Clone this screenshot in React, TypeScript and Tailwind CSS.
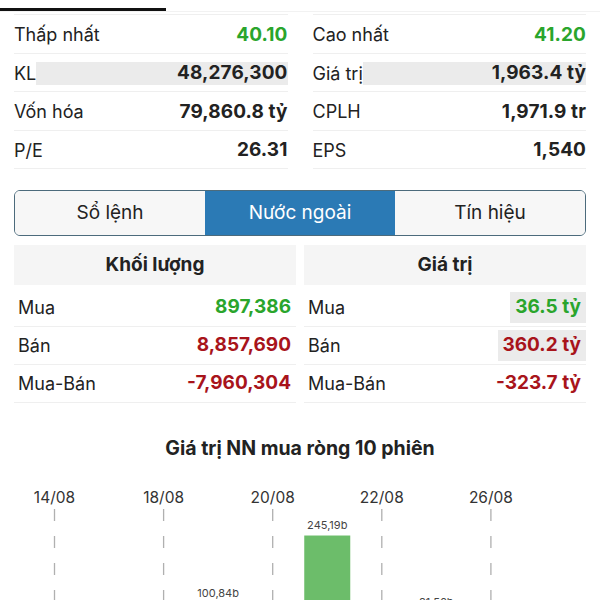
import React from 'react';

const font = { fontFamily: 'Inter, "Noto Sans", sans-serif' };

type Stat = { label: string; value: string; color?: string; flash?: boolean };

const leftStats: Stat[] = [
  { label: 'Thấp nhất', value: '40.10', color: 'text-[#2aa52c]' },
  { label: 'KL', value: '48,276,300', flash: true },
  { label: 'Vốn hóa', value: '79,860.8 tỷ' },
  { label: 'P/E', value: '26.31' },
];

const rightStats: Stat[] = [
  { label: 'Cao nhất', value: '41.20', color: 'text-[#2aa52c]' },
  { label: 'Giá trị', value: '1,963.4 tỷ', flash: true },
  { label: 'CPLH', value: '1,971.9 tr' },
  { label: 'EPS', value: '1,540' },
];

const StatColumn = ({ rows }: { rows: Stat[] }) => (
  <div className="flex flex-col border-b border-[#efefef]">
    {rows.map((r) => (
      <div key={r.label} className="h-[38.5px] border-t border-[#efefef] flex items-center pt-[2px]">
        <span className="text-[18px] text-[#222] whitespace-nowrap">{r.label}</span>
        <div
          className={
            'flex-1 h-[23px] flex items-center justify-end ' + (r.flash ? 'bg-[#ebebeb]' : '')
          }
        >
          <span className={'text-[19px] font-bold tracking-[0.1px] ' + (r.color ?? 'text-[#222]')}>{r.value}</span>
        </div>
      </div>
    ))}
  </div>
);

type Flow = { label: string; value: string; color: string; flash?: boolean };

const ForeignColumn = ({ title, rows }: { title: string; rows: Flow[] }) => (
  <div className="flex flex-col">
    <div className="h-[40px] bg-[#f5f5f5] flex items-center justify-center text-[19px] font-bold text-[#222]">
      {title}
    </div>
    <div className="mt-[4px] flex flex-col">
      {rows.map((r) => (
        <div key={r.label} className="h-[38px] border-b border-[#efefef] flex items-center justify-between pl-[4px]">
          <span className="text-[18px] text-[#222]">{r.label}</span>
          <span
            className={
              'h-[31px] px-[5px] flex items-center text-[19px] font-bold ' +
              r.color +
              (r.flash ? ' bg-[#ebebeb]' : '')
            }
          >
            {r.value}
          </span>
        </div>
      ))}
    </div>
  </div>
);

const dates = ['14/08', '15/08', '18/08', '19/08', '20/08', '21/08', '22/08', '25/08', '26/08', '27/08'];
const bars: Record<number, { v: number; label: string }> = {
  3: { v: 100.84, label: '100,84b' },
  5: { v: 245.19, label: '245,19b' },
  7: { v: 81.56, label: '81,56b' },
};

const Chart = () => {
  const step = 54.55;
  const x0 = 54.5;
  const base = 180; // zero line, relative to chart top (y=470)
  const k = 0.471;
  return (
    <div className="relative h-[240px] w-full">
      <svg className="absolute left-0 top-0" width="600" height="240">
        {dates.map((d, i) =>
          i % 2 === 0 ? (
            <line
              key={d}
              x1={x0 + i * step}
              x2={x0 + i * step}
              y1={38}
              y2={240}
              stroke="#b0b0b0"
              strokeWidth={1.3}
              strokeDasharray="12 15"
            />
          ) : null
        )}
        {Object.entries(bars).map(([i, b]) => {
          const h = b.v * k;
          const cx = x0 + Number(i) * step;
          return <rect key={i} x={cx - 23} y={base - h} width={46} height={h} fill="#6cbd6a" />;
        })}
      </svg>
      {dates.map((d, i) =>
        i % 2 === 0 ? (
          <div
            key={d}
            className="absolute top-[15px] w-[60px] -ml-[30px] text-center text-[15.5px] text-[#333]"
            style={{ left: x0 + i * step }}
          >
            {d}
          </div>
        ) : null
      )}
      {Object.entries(bars).map(([i, b]) => (
        <div
          key={i}
          className="absolute w-[60px] -ml-[30px] text-center text-[11px] leading-[14px] text-[#444]"
          style={{ left: x0 + Number(i) * step, top: base - b.v * k - 18 }}
        >
          {b.label}
        </div>
      ))}
    </div>
  );
};

export default function App() {
  return (
    <div className="w-full bg-white" style={font}>
      <div className="h-[12px] border-b border-[#f2f2f2] flex">
        <div className="w-[166px] h-[3px] mt-[8px] bg-[#111]" />
      </div>

      <div className="mt-[2px] px-[14px] grid grid-cols-2 gap-x-[25px]">
        <StatColumn rows={leftStats} />
        <StatColumn rows={rightStats} />
      </div>

      <div className="mt-[21px] mx-[14px] h-[46px] border border-[#4c6b7c] rounded-[6px] overflow-hidden flex text-[19px]">
        <div className="flex-1 bg-[#f7f7f7] text-[#222] flex items-center justify-center">Sổ lệnh</div>
        <div className="flex-1 bg-[#2b7ab5] text-white flex items-center justify-center">Nước ngoài</div>
        <div className="flex-1 bg-[#f7f7f7] text-[#222] flex items-center justify-center">Tín hiệu</div>
      </div>

      <div className="mt-[9px] px-[14px] grid grid-cols-2 gap-x-[8px]">
        <ForeignColumn
          title="Khối lượng"
          rows={[
            { label: 'Mua', value: '897,386', color: 'text-[#2aa52c]' },
            { label: 'Bán', value: '8,857,690', color: 'text-[#a8141b]' },
            { label: 'Mua-Bán', value: '-7,960,304', color: 'text-[#a8141b]' },
          ]}
        />
        <ForeignColumn
          title="Giá trị"
          rows={[
            { label: 'Mua', value: '36.5 tỷ', color: 'text-[#2aa52c]', flash: true },
            { label: 'Bán', value: '360.2 tỷ', color: 'text-[#a8141b]', flash: true },
            { label: 'Mua-Bán', value: '-323.7 tỷ', color: 'text-[#a8141b]' },
          ]}
        />
      </div>

      <div className="mt-[31px] text-center text-[19.5px] font-bold text-[#222]">Giá trị NN mua ròng 10 phiên</div>

      <div className="mt-[8px]">
        <Chart />
      </div>
    </div>
  );
}
